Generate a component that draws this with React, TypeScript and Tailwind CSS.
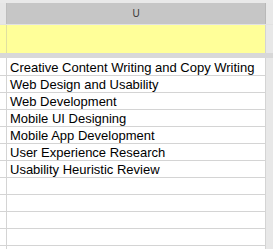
import React from 'react';

const skills = [
    'Creative Content Writing and Copy Writing',
    'Web Design and Usability',
    'Web Development',
    'Mobile UI Designing',
    'Mobile App Development',
    'User Experience Research',
    'Usability Heuristic Review',
    '',
    '',
    '',
    '',
];

const Row: React.FC<{ text: string; first?: boolean }> = ({ text, first }) => (
    <div className={`flex ${first ? 'h-[18px]' : 'h-[17px]'}`}>
        <div className="w-[6px] border-b border-[#d4d4d4] bg-white" />
        <div className="w-[1px] bg-[#d4d4d4]" />
        <div className="flex-1 flex items-end border-b border-r border-[#d4d4d4] bg-white pl-[3px]">
            <span className="text-[13px] leading-[15px] text-black whitespace-nowrap">{text}</span>
        </div>
        <div className="w-[7px] bg-[#e8e8e8]" />
    </div>
);

export default function App() {
    return (
        <div
            className="w-[273px] h-[249px] overflow-hidden bg-white flex flex-col"
            style={{ fontFamily: '"Liberation Sans", Arial, sans-serif' }}
        >
            <div className="h-[3px] bg-[#e9e9e9]" />

            {/* column headings */}
            <div className="flex h-[21px]">
                <div className="w-[6px] bg-[#e6e6e6]" />
                <div className="w-[1px] bg-[#bdbdbd]" />
                <div className="flex-1 flex items-center justify-center bg-[#c6c6c6] border-r border-[#b8b8b8]">
                    <span className="text-[10px] leading-none text-[#3a3a3a]">U</span>
                </div>
                <div className="w-[7px] bg-[#e8e8e8]" />
            </div>
            <div className="h-[1px] bg-[#e2e2e2]" />

            {/* highlighted heading row */}
            <div className="flex h-[28px]">
                <div className="w-[6px] bg-[#ffff9c]" />
                <div className="w-[1px] bg-[#e0e0a0]" />
                <div className="flex-1 bg-[#ffff99] border-r border-[#d4d4d4]" />
                <div className="w-[7px] bg-[#e8e8e8]" />
            </div>
            <div className="h-[5px] bg-[#d8d8d8]" />

            {skills.map((s, i) => (
                <Row key={i} text={s} first={i === 0} />
            ))}

            <div className="flex flex-1">
                <div className="w-[6px] bg-white" />
                <div className="w-[1px] bg-[#d4d4d4]" />
                <div className="flex-1 bg-white border-r border-[#d4d4d4]" />
                <div className="w-[7px] bg-[#e8e8e8]" />
            </div>
        </div>
    );
}
